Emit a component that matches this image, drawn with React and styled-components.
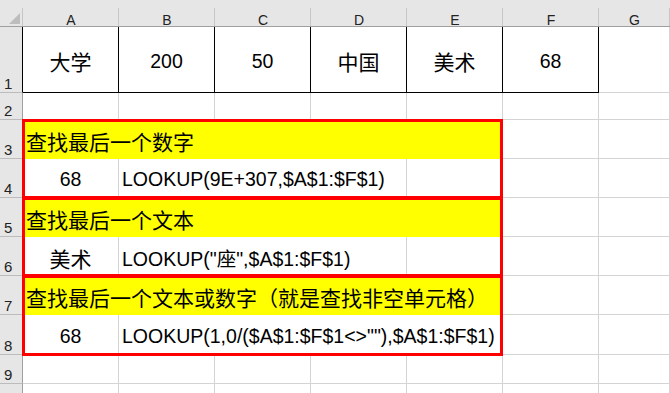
import styled, { createGlobalStyle } from "styled-components";

const GlobalStyle = createGlobalStyle`
  html, body {
    margin: 0;
    padding: 0;
    background: #fff;
    overflow: hidden;
  }
  *, *::before, *::after {
    box-sizing: border-box;
  }
`;

const TEMPLATE = "23px repeat(6, 96px) 1fr";
const COLS = ["A", "B", "C", "D", "E", "F", "G"];
const GRID = "#d4d4d4";
const HEAD_BG = "#e6e6e6";
const HEAD_LINE = "#9f9f9f";

// header separators only cover the lower strip of the header bar
const headSeparator = `
  background: linear-gradient(#c6c6c6, #c6c6c6) right bottom / 1px 18px no-repeat, ${HEAD_BG};
`;

const Sheet = styled.div`
  width: 670px;
  height: 393px;
  overflow: hidden;
  display: flex;
  flex-direction: column;
  font-family: "Liberation Sans", "Noto Sans CJK SC", sans-serif;
  color: #000;
`;

const Row = styled.div`
  display: grid;
  grid-template-columns: ${TEMPLATE};
  height: ${(p) => p.$h}px;
  flex-shrink: 0;
`;

const HeadBar = styled(Row)`
  background: ${HEAD_BG};
  border-bottom: 1px solid ${HEAD_LINE};
`;

const Corner = styled.div`
  ${headSeparator}
  display: flex;
  align-items: flex-end;
  justify-content: flex-end;
  padding: 0 3px 2px 0;
`;

const ColHead = styled.div`
  ${headSeparator}
  display: flex;
  align-items: flex-end;
  justify-content: center;
  font-size: 14px;
  line-height: 12px;
  color: #222;
`;

const RowHead = styled.div`
  background: ${HEAD_BG};
  border-right: 1px solid ${(p) => p.$edge || HEAD_LINE};
  border-bottom: 1px solid #bcbcbc;
  display: flex;
  align-items: flex-end;
  padding: 0 0 1px 4px;
  font-size: 15px;
  line-height: 14px;
  color: #222;
`;

const Cell = styled.div`
  grid-column: span ${(p) => p.$span || 1};
  display: flex;
  align-items: center;
  justify-content: ${(p) => (p.$align === "center" ? "center" : "flex-start")};
  padding: 3px 3px 0;
  white-space: nowrap;
  font-size: ${(p) => (p.$cjk ? 21 : 19.5)}px;
  background: ${(p) => p.$fill || "transparent"};
  border-right: 1px solid ${(p) => p.$fill || p.$edge || GRID};
  border-bottom: 1px solid ${(p) => p.$fill || p.$edge || GRID};
`;

// red outline drawn over a pair of rows, sitting on the grid lines
const Group = styled.div`
  position: relative;
  display: flex;
  flex-direction: column;
  flex-shrink: 0;

  &::after {
    content: "";
    position: absolute;
    left: 22px;
    top: -1px;
    width: 481px;
    height: calc(100% + 2px);
    border: 3px solid #ff0000;
    pointer-events: none;
  }
`;

const SelectAll = () => (
  <svg width="11" height="11" viewBox="0 0 11 11">
    <polygon points="11,0 11,11 0,11" fill="#bdbdbd" />
  </svg>
);

const EmptyRow = ({ n, h }) => (
  <Row $h={h}>
    <RowHead>{n}</RowHead>
    {COLS.map((c) => (
      <Cell key={c} />
    ))}
  </Row>
);

const TitleRow = ({ n, children }) => (
  <Row $h={39}>
    <RowHead>{n}</RowHead>
    <Cell $span={5} $fill="#ffff00" $cjk>
      {children}
    </Cell>
    <Cell />
    <Cell />
  </Row>
);

const FormulaRow = ({ n, h = 39, value, cjk, formula, span }) => (
  <Row $h={h}>
    <RowHead>{n}</RowHead>
    <Cell $align="center" $cjk={cjk}>
      {value}
    </Cell>
    <Cell $span={span}>{formula}</Cell>
    {Array.from({ length: 6 - span }, (_, i) => (
      <Cell key={i} />
    ))}
  </Row>
);

const firstRow = [
  { t: "大学", cjk: true },
  { t: "200" },
  { t: "50" },
  { t: "中国", cjk: true },
  { t: "美术", cjk: true },
  { t: "68" },
];

export default function App() {
  return (
    <>
      <GlobalStyle />
      <Sheet>
        <HeadBar $h={27}>
          <Corner>
            <SelectAll />
          </Corner>
          {COLS.map((c) => (
            <ColHead key={c}>{c}</ColHead>
          ))}
        </HeadBar>

        <Row $h={66}>
          <RowHead $edge="#000">1</RowHead>
          {firstRow.map((c) => (
            <Cell key={c.t} $align="center" $cjk={c.cjk} $edge="#000">
              {c.t}
            </Cell>
          ))}
          <Cell />
        </Row>

        <EmptyRow n={2} h={27} />

        <Group>
          <TitleRow n={3}>查找最后一个数字</TitleRow>
          <FormulaRow n={4} value="68" formula="LOOKUP(9E+307,$A$1:$F$1)" span={3} />
        </Group>

        <Group>
          <TitleRow n={5}>查找最后一个文本</TitleRow>
          <FormulaRow n={6} value="美术" cjk formula={'LOOKUP("座",$A$1:$F$1)'} span={3} />
        </Group>

        <Group>
          <TitleRow n={7}>查找最后一个文本或数字（就是查找非空单元格）</TitleRow>
          <FormulaRow
            n={8}
            h={40}
            value="68"
            formula={'LOOKUP(1,0/($A$1:$F$1<>""),$A$1:$F$1)'}
            span={4}
          />
        </Group>

        <EmptyRow n={9} h={29} />
        {/* row 10 only peeks in at the bottom edge, its number stays below the fold */}
        <EmptyRow h={28} />
      </Sheet>
    </>
  );
}
